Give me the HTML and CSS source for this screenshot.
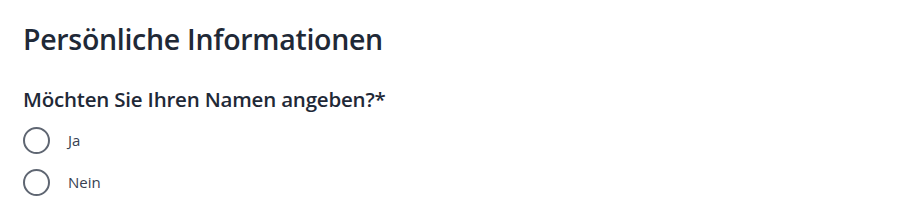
FILE: index.html
```html
<!DOCTYPE HTML>
<html>
<head>
<meta charset="utf-8">
<title>Persönliche Informationen</title>
<link rel="stylesheet" href="styles.css">
</head>
<body>

<section class="form-section">
  <h2 class="section-title">Persönliche Informationen</h2>

  <div class="question" role="radiogroup">
    <div class="question-label">Möchten Sie Ihren Namen angeben?*</div>

    <label class="option">
      <input type="radio" name="name-angeben" value="ja">
      <span class="radio"></span>
      <span class="option-text">Ja</span>
    </label>

    <label class="option">
      <input type="radio" name="name-angeben" value="nein">
      <span class="radio"></span>
      <span class="option-text">Nein</span>
    </label>
  </div>
</section>

</body>
</html>
```

FILE: styles.css
```css
* {
  box-sizing: border-box;
}

body {
  margin: 0;
  background: #fff;
  font-family: "Open Sans", "Noto Sans", sans-serif;
  color: #1f2937;
}

.form-section {
  padding: 21px 23px;
}

.section-title {
  margin: 0;
  font-size: 28.5px;
  font-weight: 600;
  line-height: 36px;
  letter-spacing: -0.3px;
}

.question {
  margin-top: 29px;
}

.question-label {
  font-size: 20.5px;
  font-weight: 600;
  line-height: 26px;
  letter-spacing: -0.2px;
  margin-bottom: 7px;
}

.option {
  display: flex;
  align-items: center;
  gap: 18px;
  height: 42px;
  cursor: pointer;
}

.option input {
  display: none;
}

.radio {
  width: 27px;
  height: 27px;
  border: 2px solid #5f6672;
  border-radius: 50%;
}

.option-text {
  font-size: 15px;
  color: #374151;
}
```
